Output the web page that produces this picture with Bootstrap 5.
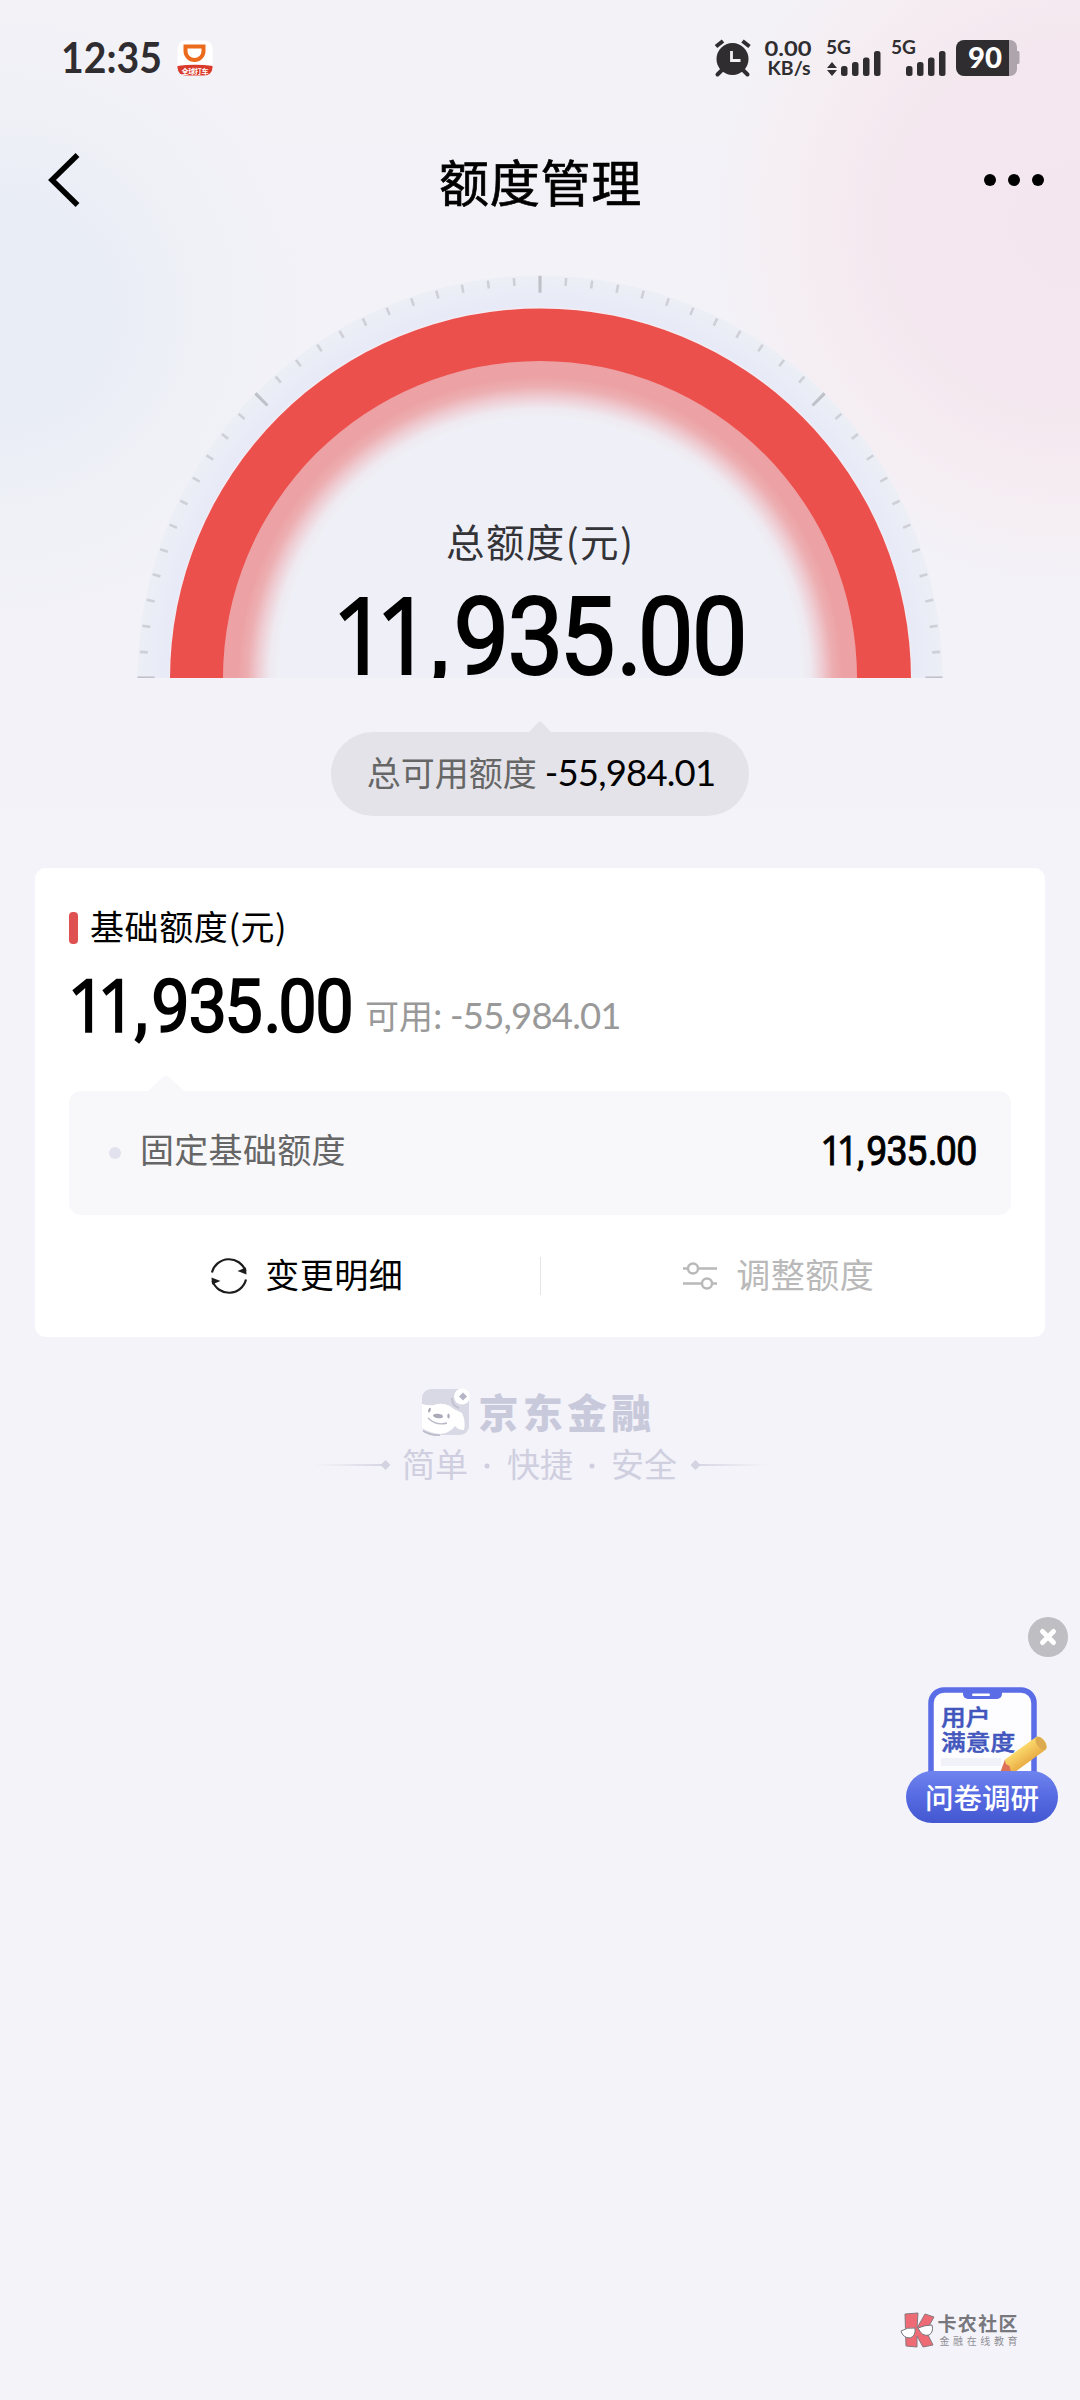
<!DOCTYPE html>
<html lang="zh-CN">
<head>
<meta charset="utf-8">
<meta name="viewport" content="width=device-width, initial-scale=1">
<title>额度管理</title>
<link href="https://cdn.jsdelivr.net/npm/bootstrap@5.3.0/dist/css/bootstrap.min.css" rel="stylesheet">
<style>
body{width:1080px;min-height:2400px;background:#f3f3f9;font-family:"Noto Sans CJK SC",sans-serif;color:#000;overflow-x:hidden}
svg{display:block;flex:none;overflow:visible}
svg.gauge{overflow:hidden}
svg text{font-family:Roboto,"Noto Sans CJK SC",sans-serif}
svg .ones{font-family:"Open Sans",sans-serif;font-weight:500}
.screen{min-height:2400px;
 background:
 radial-gradient(circle at 1075px 225px,rgba(243,229,238,.95) 0,rgba(244,230,238,.9) 180px,rgba(246,233,239,.7) 255px,rgba(247,237,241,.5) 315px,rgba(243,243,249,0) 360px),
 radial-gradient(circle at 0 310px,#e8edf6 0,#e9edf6 110px,rgba(238,240,246,.75) 200px,rgba(243,242,247,0) 310px),
 linear-gradient(#f3f2f7 0,#f2f2f8 808px,#f3f3f9 808px)}
.status-row{height:116px;padding-left:61px;padding-right:60px}
.status-row text{fill:#302d30}
.title-row{height:128px;padding:0 36px 0 47px}
.page-title{font-size:50px;font-weight:400;-webkit-text-stroke:.7px #000;letter-spacing:.8px;line-height:64px;margin-left:-12px}
.tip{margin-top:43px}
.tip-pill{width:418px;height:84px;background:#e4e3e9;font-size:34px;line-height:50px;padding:0 0 5px 2px}
.num{font-family:Lato,sans-serif;font-size:36.5px;letter-spacing:-.8px}
.gray6{color:#666}.gray9{color:#999}.grayb{color:#b9b9b9}
.limit-card{margin:52px 35px 0;padding:35px 34px 0;height:469px;border-radius:11px}
.limit-head{height:46px;font-size:34px;letter-spacing:.6px;line-height:46px}
.mark-bar{width:9px;height:32px;border-radius:4px;background:#df5150;margin:9px 12px 0 0}
.limit-sum{margin-top:30px;height:59px;padding-left:5px;gap:14px}
.limit-sum .avail{font-size:34px;line-height:40px;margin-top:16px}
.fixed-box{margin-top:53px;height:124px;border-radius:12px;background:#f8f8fb;padding:0 35px 0 40px}
.fixed-box .arrow{top:-16px;left:78px}
.dot{width:12px;height:12px;border-radius:50%;background:#e2e1ee;margin-right:19px}
.fixed-box .name{font-size:34px;letter-spacing:.3px;padding-bottom:9px}
.acts{height:122px;font-size:34px;letter-spacing:.5px;line-height:50px}
.acts span{padding-bottom:4px}
.acts .half{padding-left:5px}
.acts .sep{width:1px;height:38px;background:#e6e6ea}
.brand{margin-top:51px;height:48px;color:#c9c9dc;font-size:40px;font-weight:900;letter-spacing:4.2px;line-height:48px;margin-left:-4px}
.brand span{padding-bottom:3px}
.slogan{height:58px;line-height:50px;gap:11px}
.survey{right:8px;top:1616px;width:168px}
.wm{left:899px;top:2310px}
</style>
<script src="https://cdn.jsdelivr.net/npm/bootstrap@5.3.0/dist/js/bootstrap.bundle.min.js"></script>
</head>
<body>
<main class="screen position-relative d-flex flex-column">
  <div class="status-row d-flex align-items-center justify-content-between">
    <div class="d-flex align-items-center">
      <svg width="101" height="40" viewBox="0 0 101 40"><text x="0" y="35" style="font-family:Lato" font-size="42.5" font-weight="700" textLength="101" lengthAdjust="spacingAndGlyphs">12:35</text></svg>
      <svg width="36" height="36" viewBox="0 0 36 36" style="margin-left:15px">
        <defs><clipPath id="ic"><rect x=".5" y=".5" width="35" height="35" rx="8"/></clipPath></defs>
        <g clip-path="url(#ic)"><rect width="36" height="36" fill="#fff"/>
        <path d="M8.500 6.500h18v4.500a9 9 0 0 1-18 0z" fill="none" stroke="#ec6a1c" stroke-width="4"/>
        <path d="M0 26q18 -2.500 36 0v10H0z" fill="#d93a2b"/></g>
        <text x="4.500" y="34" font-size="7" font-weight="700" style="fill:#fff" textLength="27">全球打车</text>
      </svg>
    </div>
    <svg width="306" height="40" viewBox="715 38 306 40">
      <g fill="#302d30" stroke="#302d30" stroke-linecap="round">
        <circle cx="733.500" cy="59" r="16" stroke="none"/>
        <path d="M723 70l-4.500 4.500M744 70l4.500 4.500" stroke-width="4"/>
        <path d="M717 46.500l7-5.500M750.500 46.500l-7-5.500" stroke-width="4" stroke-linecap="butt"/>
        <path d="M732.500 51v9.500h9" fill="none" stroke="#f3f0f5" stroke-width="2.800" stroke-linecap="butt"/>
      </g>
      <g font-weight="700">
        <text x="765.500" y="56" font-size="21.500" style="font-family:Lato" textLength="47" lengthAdjust="spacingAndGlyphs">0.00</text>
        <text x="768.500" y="75" font-size="19" style="font-family:Lato" textLength="43" lengthAdjust="spacingAndGlyphs">KB/s</text>
        <text x="827" y="54" font-size="18.500" style="font-family:Lato" textLength="25" lengthAdjust="spacingAndGlyphs">5G</text>
        <text x="892" y="54" font-size="18.500" style="font-family:Lato" textLength="25" lengthAdjust="spacingAndGlyphs">5G</text>
      </g>
      <g fill="#302d30">
        <path d="M828 68l5-6 5 6zM828 70l5 6 5-6z"/>
        <rect x="842" y="66" width="6.500" height="10" rx="2.500"/><rect x="853" y="62" width="6.500" height="14" rx="2.500"/><rect x="864" y="57.500" width="6.500" height="18.500" rx="2.500"/><rect x="875" y="51" width="6.500" height="25" rx="2.500"/>
        <rect x="907" y="66" width="6.500" height="10" rx="2.500"/><rect x="918" y="62" width="6.500" height="14" rx="2.500"/><rect x="929" y="57.500" width="6.500" height="18.500" rx="2.500"/><rect x="940" y="51" width="6.500" height="25" rx="2.500"/>
      </g>
      <path d="M1009 40h2a7 7 0 0 1 7 7v4h1a1.500 1.500 0 0 1 1.500 1.500v10a1.500 1.500 0 0 1-1.500 1.500h-1v5a7 7 0 0 1-7 7h-2z" fill="#aea4ab"/>
      <path d="M1010 40v36h-45a8 8 0 0 1-8-8V48a8 8 0 0 1 8-8z" fill="#302d30"/>
      <text x="969" y="68" font-size="28" font-weight="900" style="font-family:Lato;fill:#fff" textLength="34" lengthAdjust="spacingAndGlyphs">90</text>
    </svg>
  </div>

  <nav class="title-row d-flex align-items-center justify-content-between">
    <svg width="62" height="60" viewBox="0 0 62 60"><path d="M30.500 5L5 30l25.500 25" fill="none" stroke="#000" stroke-width="5.500"/></svg>
    <div class="page-title">额度管理</div>
    <svg width="60" height="12" viewBox="0 0 60 12"><circle cx="6" cy="6" r="6"/><circle cx="30" cy="6" r="6"/><circle cx="54" cy="6" r="6"/></svg>
  </nav>

  <svg class="gauge" width="1080" height="434" viewBox="0 244 1080 434">
    <defs>
      <radialGradient id="halo" gradientUnits="userSpaceOnUse" cx="540" cy="679" r="330">
        <stop offset="0" stop-color="#eff0f7"/><stop offset=".79" stop-color="#eff0f7"/>
        <stop offset=".82" stop-color="#efe9f0"/><stop offset=".855" stop-color="#eeccd2"/>
        <stop offset=".885" stop-color="#edafb2"/><stop offset=".915" stop-color="#eca2a5"/><stop offset="1" stop-color="#eda0a3"/>
      </radialGradient>
      <radialGradient id="rim" gradientUnits="userSpaceOnUse" cx="540" cy="678" r="403">
        <stop offset=".92" stop-color="#e7eaf7"/><stop offset="1" stop-color="#edeff6"/>
      </radialGradient>
    </defs>
    <circle cx="540" cy="678" r="402.500" fill="url(#rim)"/>
    <path d="M143 678a397 397 0 0 1 794 0" fill="none" stroke="#cfcfd7" stroke-width="8" pathLength="48" stroke-dasharray=".1 .9" stroke-dashoffset=".05"/>
    <path d="M146 678a394 394 0 0 1 788 0" fill="none" stroke="#bfc0c8" stroke-width="17" pathLength="4" stroke-dasharray=".01 .99" stroke-dashoffset=".005"/>
    <circle cx="540.500" cy="678.500" r="371.500" fill="#f3ecf3"/>
    <circle cx="540.500" cy="679" r="370.500" fill="#eb504d"/>
    <circle cx="540" cy="678" r="317" fill="url(#halo)"/>
    <text x="446" y="557" font-size="38.500" fill="#333338" textLength="187" style="font-family:'Noto Sans CJK SC'">总额度(元)</text>
    <g transform="translate(342 673.500) scale(.93 1)"><text x="-11 36 94 120 178 234 295 318 376" y="0" font-size="107" font-weight="400" stroke="#000" stroke-width="2"><tspan class="ones">11</tspan>,935.00</text></g>
  </svg>

  <section class="tip d-flex flex-column align-items-center">
    <svg width="22" height="11" viewBox="0 0 22 11"><path d="M0 11L9 1.500q2-2 4 0L22 11z" fill="#e4e3e9"/></svg>
    <div class="tip-pill rounded-pill d-flex align-items-center justify-content-center gap-2"><span class="gray6">总可用额度</span><span class="num">-55,984.01</span></div>
  </section>

  <section class="limit-card bg-white">
    <div class="limit-head d-flex"><i class="mark-bar"></i>基础额度(元)</div>
    <div class="limit-sum d-flex">
      <svg width="277" height="60" viewBox="0 -77 401 87"><g transform="scale(.93 1)"><text x="-11 36 94 120 178 234 295 318 376" y="0" font-size="107" font-weight="400" stroke="#000" stroke-width="2.500"><tspan class="ones">11</tspan>,935.00</text></g></svg>
      <div class="avail gray9">可用: <span class="num">-55,984.01</span></div>
    </div>
    <div class="fixed-box position-relative d-flex align-items-center">
      <svg class="arrow position-absolute" width="38" height="17" viewBox="0 0 38 17"><path d="M0 17L16 2q3-3 6 0l16 15z" fill="#f8f8fb"/></svg>
      <i class="dot"></i><span class="name gray6 me-auto">固定基础额度</span>
      <svg width="152" height="34" viewBox="0 -77 402 90"><g transform="scale(.93 1)"><text x="-11 36 94 120 178 234 295 318 376" y="0" font-size="107" font-weight="400" stroke="#000" stroke-width="2.500"><tspan class="ones">11</tspan>,935.00</text></g></svg>
    </div>
    <div class="acts d-flex align-items-center">
      <div class="half flex-fill w-50 d-flex align-items-center justify-content-center" style="gap:17px">
        <svg width="38" height="38" viewBox="0 0 38 38"><g fill="none" stroke="#1c1c1c" stroke-width="2.200"><path d="M2 15.500A17.500 17.500 0 0 1 35.500 14"/><path d="M36 22.500A17.500 17.500 0 0 1 2.500 24"/></g><path d="M36 10.500l.5 7-9-3.500zM2 27.500l-.5-7 9 3.500z" fill="#1c1c1c"/></svg>
        <span>变更明细</span>
      </div>
      <i class="sep"></i>
      <div class="half flex-fill w-50 d-flex align-items-center justify-content-center grayb" style="gap:18px">
        <svg width="36" height="28" viewBox="0 0 36 28"><g fill="none" stroke="#b9b9b9" stroke-width="2.400"><path d="M1 6.500h5M16 6.500h19M1 21.500h19M30 21.500h5"/><circle cx="11" cy="6.500" r="5"/><circle cx="25" cy="21.500" r="5"/></g></svg>
        <span>调整额度</span>
      </div>
    </div>
  </section>

  <footer>
    <div class="brand d-flex justify-content-center align-items-center" style="gap:8px">
      <svg width="50" height="48" viewBox="0 0 50 48">
        <rect x="1" y="1" width="47" height="46" rx="9" fill="#d9d9e6"/>
        <path d="M1 16q7 2 12 1 8-3 16 1 3 3 8 5l4 2q4 8 2 17-6 0-9-4-5 7-15 8Q8 45 1 40z" fill="#fff"/>
        <path d="M2 43q9 5 17 4" fill="none" stroke="#bbbbc9" stroke-width="1.500"/>
        <ellipse cx="17" cy="28" rx="5" ry="2.200" fill="#aaaab9" transform="rotate(8 17 28)"/>
        <ellipse cx="8.500" cy="22" rx="1.200" ry="2.500" fill="#aaaab9" transform="rotate(18 8 22)"/><ellipse cx="27.500" cy="28" rx="1.200" ry="2.500" fill="#aaaab9"/>
        <path d="M7 30q8 8 19 5" fill="none" stroke="#b9b9c7" stroke-width="1.300"/>
        <path d="M31 10q0 8 7 10" fill="none" stroke="#c2c2d1" stroke-width="2"/>
        <circle cx="41" cy="8.500" r="8" fill="#fff"/><path d="M42 4.500l4 4-4 4-4-4z" fill="#b5b5c5"/>
      </svg>
      <span>京东金融</span>
    </div>
    <div class="slogan d-flex justify-content-center align-items-center">
      <svg width="78" height="12" viewBox="0 0 78 12"><defs><linearGradient id="fl"><stop stop-color="#dcdce8" stop-opacity="0"/><stop offset="1" stop-color="#d6d6e3"/></linearGradient></defs><rect y="5" width="70" height="2" fill="url(#fl)"/><path d="M72.500 1l5 5-5 5-5-5z" fill="#d3d3e1"/></svg>
      <svg width="277" height="44" viewBox="0 0 277 44"><g fill="#cfcfe0" font-size="33"><text y="34" x="0 33" style="font-family:'Noto Sans CJK SC'">简单</text><text y="34" x="105 138" style="font-family:'Noto Sans CJK SC'">快捷</text><text y="34" x="209 242" style="font-family:'Noto Sans CJK SC'">安全</text><circle cx="85" cy="23" r="2.500"/><circle cx="190" cy="23" r="2.500"/></g></svg>
      <svg width="78" height="12" viewBox="0 0 78 12"><g transform="matrix(-1 0 0 1 78 0)"><rect y="5" width="70" height="2" fill="url(#fl)"/><path d="M72.500 1l5 5-5 5-5-5z" fill="#d3d3e1"/></g></svg>
    </div>
  </footer>

  <aside class="survey position-absolute">
    <svg width="168" height="210" viewBox="904 1616 168 210">
      <defs>
        <linearGradient id="pg" x1="0" y1="0" x2="0" y2="1"><stop stop-color="#6f84ee"/><stop offset=".5" stop-color="#566ae2"/><stop offset="1" stop-color="#4357d0"/></linearGradient>
        <linearGradient id="pen" x1="0" y1="0" x2="1" y2="0"><stop stop-color="#fbd96c"/><stop offset="1" stop-color="#e9ad45"/></linearGradient>
      </defs>
      <circle cx="1048" cy="1637" r="20" fill="#bfbfc3"/><path d="M1042.500 1631.500l11 11M1053.500 1631.500l-11 11" stroke="#fff" stroke-width="5" stroke-linecap="round"/>
      <path d="M931 1780v-77a13 13 0 0 1 13-13h77a13 13 0 0 1 13 13v77z" fill="#fdfdff" stroke="#5a6ce6" stroke-width="5.500"/>
      <path d="M963 1689h39v5a5 5 0 0 1-5 5h-29a5 5 0 0 1-5-5z" fill="#5a6ce6"/><rect x="972" y="1693.500" width="18" height="2.600" rx="1.300" fill="#fff"/>
      <rect x="941" y="1758" width="60" height="8" fill="#f1f1fa"/>
      <g font-weight="500" fill="#4256bd" stroke="#4256bd" stroke-width=".5"><text transform="translate(941 1724.500) scale(1.150 1)" font-size="21.500">用户</text><text transform="translate(941 1749.500) scale(1.150 1)" font-size="21.500">满意度</text></g>
      <g transform="translate(1000 1773) rotate(54)"><path d="M0 0l-8-12h16z" fill="#dd7259"/><path d="M-8-12v-38a8 5 0 0 1 16 0v38l-4 2-4-2-4 2z" fill="url(#pen)"/><ellipse cx="0" cy="-50.500" rx="7.500" ry="4" fill="#dcaa50"/></g>
      <rect x="906" y="1771" width="152" height="52" rx="26" fill="url(#pg)"/>
      <text x="925" y="1808.500" font-size="28.500" font-weight="500" fill="#fff" textLength="114">问卷调研</text>
    </svg>
  </aside>

  <div class="wm position-absolute">
    <svg width="120" height="42" viewBox="899 2310 120 42">
      <g fill="#ee6a74" stroke="#87797f" stroke-width="1"><path d="M905 2314l13-1-1 15 8-14 9 3-8 14 7 14-10 2-6-11v11l-11-1z"/></g>
      <g fill="#fff" stroke="#77777d" stroke-width="1"><path d="M901 2331q6-4 14-3 1 8-5 10-7 0-9-7zM918 2328q7-3 14-3 2 7-3 10-7 2-11-7z"/></g>
      <text x="937.500" y="2331" font-size="19" font-weight="700" fill="#77777d" textLength="80">卡农社区</text>
      <text x="939.500" y="2345" font-size="10" fill="#8f8f95" textLength="78">金融在线教育</text>
    </svg>
  </div>
</main>
</body>
</html>
